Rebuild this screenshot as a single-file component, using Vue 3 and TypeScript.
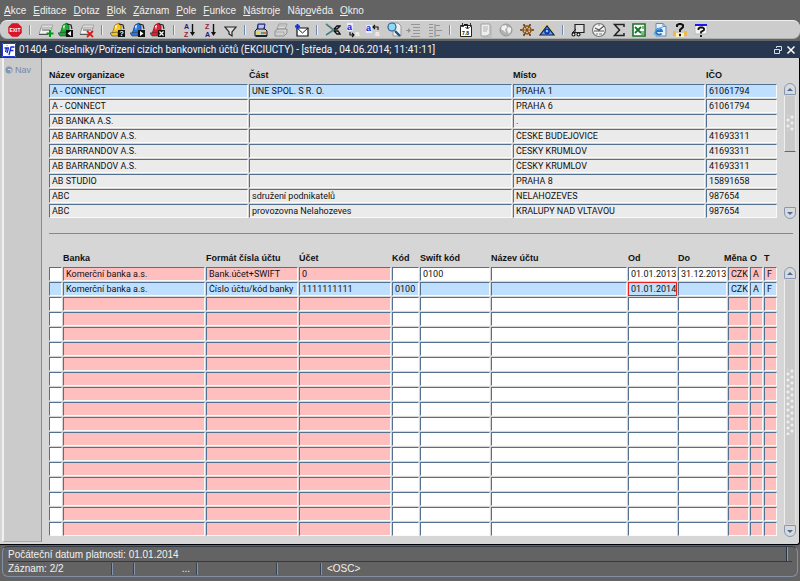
<script setup lang="ts">
import { ref } from 'vue'

interface Shape {
  d?: string
  f?: string
  s?: string
  w?: number
  t?: string
  x?: number
  y?: number
  z?: number
}
interface Tool {
  name: string
  shapes: Shape[]
}

const menu: [string, string, string][] = [
  ['', 'A', 'kce'],
  ['', 'E', 'ditace'],
  ['', 'D', 'otaz'],
  ['', 'B', 'lok'],
  ['', 'Z', 'áznam'],
  ['', 'P', 'ole'],
  ['', 'F', 'unkce'],
  ['', 'N', 'ástroje'],
  ['Náp', 'o', 'věda'],
  ['', 'O', 'kno'],
]

const sheets: Shape[] = [
  { d: 'M4 3H15L13 8H2Z', f: '#dddddd', s: '#a0a0a0', w: 0.8 },
  { d: 'M3 6H14L11 12H1Z', f: '#f2f2f2', s: '#8a8a8a', w: 0.8 },
  { d: 'M4 8H12M1 12.500H10', s: '#555555' },
]
const bin = (color: string, dark: string): Shape[] => [
  { d: 'M5 3L9 1L11 4V12L2 12Z', f: color, s: dark, w: 0.8 },
  { d: 'M5 4L7 3L6 8Z', f: '#ffffff' },
  { d: 'M9 2L13 3L14 7', s: '#222222', w: 1.2 },
  { d: 'M0 11L8 10V14L2 14Z', f: color, s: '#333333', w: 0.6 },
  { d: 'M8 8H15V15H8Z', f: '#111111' },
]

const groups: Tool[][] = [
  [
    {
      name: 'Konec',
      shapes: [
        { d: 'M5 1H11L15 5V11L11 15H5L1 11V5Z', f: '#dc1428', s: '#b8cccc', w: 0.5 },
        { t: 'EXIT', x: 2.4, y: 10, z: 5, f: '#ffffff' },
      ],
    },
  ],
  [
    { name: 'Vložit záznam', shapes: [...sheets, { d: 'M12 8V15M8.500 11.500H15.500', s: '#009a18', w: 2 }] },
    { name: 'Uložit', shapes: [...bin('#18b030', '#087020'), { d: 'M13 9V14L9.500 11.500Z', f: '#ffffff' }] },
    { name: 'Smazat záznam', shapes: [...sheets, { d: 'M8 9L14 15M14 9L8 15', s: '#e01818', w: 1.8 }] },
  ],
  [
    { name: 'Zadat dotaz', shapes: [...bin('#f8c820', '#a87808'), { t: '?', x: 9.4, y: 14, z: 7, f: '#ffffff' }] },
    { name: 'Provést dotaz', shapes: [...bin('#2878e0', '#103c88'), { d: 'M10 9V14L13.500 11.500Z', f: '#ffffff' }] },
    { name: 'Zrušit dotaz', shapes: [...bin('#e02030', '#801018'), { d: 'M9.500 9.500L13.500 13.500M13.500 9.500L9.500 13.500', s: '#ffffff', w: 1.2 }] },
  ],
  [
    {
      name: 'Seřadit vzestupně',
      shapes: [
        { t: 'A', x: 3, y: 7, z: 7, f: '#18187c' },
        { t: 'Z', x: 3, y: 15, z: 7, f: '#98203c' },
        { d: 'M11.500 2V12', s: '#111111', w: 1.4 },
        { d: 'M9 10H14L11.500 14Z', f: '#111111' },
      ],
    },
    {
      name: 'Seřadit sestupně',
      shapes: [
        { t: 'Z', x: 3, y: 7, z: 7, f: '#98203c' },
        { t: 'A', x: 3, y: 15, z: 7, f: '#18187c' },
        { d: 'M11.500 2V12', s: '#111111', w: 1.4 },
        { d: 'M9 10H14L11.500 14Z', f: '#111111' },
      ],
    },
    { name: 'Filtr', shapes: [{ d: 'M3 5H14L10 10V14L7 12V10Z', f: '#dddddd', s: '#222222', w: 1.2 }] },
  ],
  [
    {
      name: 'Tisk',
      shapes: [
        { d: 'M5 2H12L11 8H4Z', f: '#7088dc', s: '#20206c' },
        { d: 'M6 4H11M6 6H10', s: '#ffffff' },
        { d: 'M2 9L4 7H12L14 9V14H2Z', f: '#cccccc', s: '#111111' },
        { d: 'M3 11H7', s: '#e8e020', w: 1.3 },
        { d: 'M8 11H10', s: '#20a030', w: 1.3 },
        { d: 'M10 11H13', s: '#d03030', w: 1.3 },
        { d: 'M3 14H14', s: '#111111', w: 1.6 },
      ],
    },
    {
      name: 'Tisk obrazovky',
      shapes: [
        { d: 'M6 2H14L12 7H4Z', f: '#dedede', s: '#999999' },
        { d: 'M2 9L5 7H14V11L11 14H2Z', f: '#d0d0d0', s: '#909090' },
        { d: 'M2 10H11V14M6 4H12', s: '#aaaaaa' },
      ],
    },
    {
      name: 'Odeslat e-mail',
      shapes: [
        { d: 'M3 6H14V14H3Z', f: '#ffffff', s: '#111111', w: 1.2 },
        { d: 'M3 6L8.500 11L14 6', s: '#222222' },
        { d: 'M3.500 2V7M1 4.500H6', s: '#1030d8', w: 2 },
      ],
    },
  ],
  [
    {
      name: 'Vyjmout',
      shapes: [
        { d: 'M1 2L10 9M1 13L10 7', s: '#4c8080', w: 1.6 },
        { d: 'M9 7L12 4L15 4L12 7L9 7M9 9L13 9L15 12L12 12L9 9', s: '#111111', w: 1.3 },
      ],
    },
    {
      name: 'Kopírovat',
      shapes: [
        { d: 'M2 1H8V9H2Z', f: '#e8ecff' },
        { t: 'a', x: 2, y: 8, z: 9, f: '#1818d8' },
        { d: 'M5 10V13H9M7 11L9 13L7 15', s: '#111111', w: 1.1 },
        { t: 'a', x: 10, y: 14, z: 8, f: '#f4f4f4' },
      ],
    },
    {
      name: 'Vložit',
      shapes: [
        { d: 'M1 3H7V11H1Z', f: '#e8ecff' },
        { t: 'a', x: 1, y: 9, z: 9, f: '#1818d8' },
        { d: 'M8 5H13V8M10 3L8 5L10 7', s: '#111111', w: 1.1 },
        { t: 'a', x: 10, y: 14, z: 8, f: '#f4f4f4' },
      ],
    },
    {
      name: 'Seznam hodnot',
      shapes: [
        { d: 'M7 1H12L15 4V14H7Z', f: '#f0f0f0', s: '#999999' },
        { d: 'M9 9L14 14', s: '#185880', w: 2.4 },
        { d: 'M2 5A4 4 0 1 0 10 5A4 4 0 1 0 2 5', f: '#90d8f8', s: '#285888', w: 1.1 },
      ],
    },
    { name: 'Vložit řádek', shapes: [{ d: 'M5 2.500H14M7 5.500H14M7 8.500H14M7 11.500H14M5 14.500H14M0 8.500H4', s: '#969696' }, { d: 'M2 6V11L5 8.500Z', f: '#969696' }] },
    { name: 'Strom', shapes: [{ d: 'M2 2.500H6M2 5.500H6M2 8.500H6M2 11.500H6M2 14.500H6M9 3.500H13M9 8.500H15M9 13.500H13M8 2V15', s: '#929292', w: 1.2 }] },
  ],
  [
    {
      name: 'Kalendář',
      shapes: [
        { d: 'M2.500 3.500H13.500V14.500H2.500Z', f: '#ffffff', s: '#222222' },
        { d: 'M2 4.500H6M12 4.500H14', s: '#444444' },
        { d: 'M4.500 3V1M12.500 3V1', s: '#333333' },
        { t: '7.8', x: 4, y: 13, z: 5, f: '#111111' },
        { d: 'M6 2.500H9.500V6M7.500 5L9.500 7L11.500 5', s: '#111111' },
      ],
    },
    { name: 'Poznámky', shapes: [{ d: 'M3 2H12V12L9 14H3Z', f: '#eeeeee', s: '#a0a0a0' }, { d: 'M5 5H10M5 7H10M5 9H9M13 4V15H5', s: '#b0b0b0' }] },
    {
      name: 'Web',
      shapes: [
        { d: 'M2 8A6 6 0 1 0 14 8A6 6 0 1 0 2 8', f: '#b0b0b0', s: '#999999' },
        { d: 'M4 4L8 3L9 6L7 7L8 11L6 9L3 7ZM10 5L13 6L13 9L11 12L9 8Z', f: '#f2f2f2' },
      ],
    },
    {
      name: 'Navigátor',
      shapes: [
        { d: 'M4 8A4 4 0 1 0 12 8A4 4 0 1 0 4 8', s: '#8c5010', w: 1.5 },
        { d: 'M2 8H14M5 3L11 13M11 3L5 13', s: '#8c5010', w: 1.1 },
        { d: 'M4 3H6M10 3H12M2 7V9M14 7V9M4 13H6M10 13H12', s: '#6c3808', w: 1.4 },
      ],
    },
    {
      name: 'Zobrazit',
      shapes: [
        { d: 'M3 4L4 6M8 1V3M13 4L12 6M1 8H3M13 8H15', s: '#e8d840', w: 1.2 },
        { d: 'M1 13L8 4L15 13Z', f: '#6c9ce0', s: '#101c3c', w: 1.2 },
        { d: 'M5.500 9.500A2.500 2.500 0 1 0 10.500 9.500A2.500 2.500 0 1 0 5.500 9.500', f: '#1848e8', s: '#102870', w: 0.8 },
        { d: 'M7 8H9V10H7Z', f: '#80d0ff' },
      ],
    },
  ],
  [
    {
      name: 'Doprava',
      shapes: [
        { d: 'M5 2.500H14V10.500H5Z', f: '#dddddd', s: '#222222', w: 1.2 },
        { d: 'M2 10.500H12M3 10L6 7', s: '#222222' },
        { d: 'M2 12.500A1.500 1.500 0 1 0 5 12.500A1.500 1.500 0 1 0 2 12.500M7 12.500A1.500 1.500 0 1 0 10 12.500A1.500 1.500 0 1 0 7 12.500', f: '#ffffff', s: '#111111', w: 1.1 },
      ],
    },
    {
      name: 'Hodiny',
      shapes: [
        { d: 'M1.500 8A6.500 6.500 0 1 0 14.500 8A6.500 6.500 0 1 0 1.500 8', f: '#f4f4f4', s: '#777777', w: 1.2 },
        { d: 'M4 6L8 8L13 4M3 9H13', s: '#555555', w: 1.1 },
        { d: 'M5 12H7M8 12H11M8 2V4', s: '#777777' },
      ],
    },
    { name: 'Součet', shapes: [{ d: 'M13 5V2.500H3.500L8.500 8L3.500 13.500H13V11', s: '#222222', w: 1.5 }] },
    {
      name: 'Export do Excelu',
      shapes: [
        { d: 'M2 2H14V14H2Z', f: '#ffffff', s: '#187428', w: 1.6 },
        { d: 'M4 5L10 11M10 5L4 11', s: '#187428', w: 1.8 },
        { d: 'M10 9H13V13H10ZM11 4H13V7H11Z', f: '#80b880' },
      ],
    },
    {
      name: 'Internet Explorer',
      shapes: [
        { d: 'M4 1.500H11L14 4.500V14H4Z', f: '#e4f0fc', s: '#6888b8' },
        { d: 'M11 1.500V4.500H14', s: '#6888b8' },
        { d: 'M4 9H10A3 3 0 1 0 9.500 11.500', s: '#2074c8', w: 1.8 },
        { d: 'M2 13Q2 7 11 5', s: '#60b0e8', w: 1 },
      ],
    },
    {
      name: 'Nápověda k aplikaci',
      shapes: [
        { d: 'M1 9H4V14H1ZM12 9H15V14H12Z', f: '#f0b848' },
        { d: 'M4 11H7V15H4ZM9 11H12V15H9Z', f: '#fff0b0' },
        { d: 'M5 5V3L7 2H9L11 3V5L8 8V10M8 12V14', s: '#111111', w: 2 },
      ],
    },
    {
      name: 'Nápověda',
      shapes: [
        { d: 'M2 3H14V12H2Z', f: '#f4f4f4', s: '#b8b8b8' },
        { d: 'M2 3H14', s: '#1818f0', w: 2 },
        { d: 'M5.500 8V6.500L7 5.500H9.500L11 6.500V8L8 10V11.500M8 13V15', s: '#111111', w: 1.8 },
      ],
    },
  ],
]

const orgHeads = ['Název organizace', 'Část', 'Místo', 'IČO']
const orgs = ref<string[][]>([
  ['A - CONNECT', 'UNE SPOL. S R. O.', 'PRAHA 1', '61061794'],
  ['A - CONNECT', '', 'PRAHA 6', '61061794'],
  ['AB BANKA A.S.', '', '.', ''],
  ['AB BARRANDOV A.S.', '', 'ČESKE BUDEJOVICE', '41693311'],
  ['AB BARRANDOV A.S.', '', 'ČESKY KRUMLOV', '41693311'],
  ['AB BARRANDOV A.S.', '', 'ČESKY KRUMLOV', '41693311'],
  ['AB STUDIO', '', 'PRAHA 8', '15891658'],
  ['ABC', 'sdružení podnikatelů', 'NELAHOZEVES', '987654'],
  ['ABC', 'provozovna Nelahozeves', 'KRALUPY NAD VLTAVOU', '987654'],
])

const accHeads = ['', 'Banka', 'Formát čísla účtu', 'Účet', 'Kód', 'Swift kód', 'Název účtu', 'Od', 'Do', 'Měna', 'O', 'T']
const required = [1, 2, 3, 9, 10, 11]
const accounts = ref<string[][]>([
  ['', 'Komerční banka a.s.', 'Bank.účet+SWIFT', '0', '', '0100', '', '01.01.2013', '31.12.2013', 'CZK', 'A', 'F'],
  ['', 'Komerční banka a.s.', 'Číslo účtu/kód banky', '1111111111', '0100', '', '', '01.01.2014', '', 'CZK', 'A', 'F'],
  ...Array.from({ length: 16 }, () => Array<string>(12).fill('')),
])
const current = ref(1)
</script>

<template>
  <div class="app">
    <nav class="menu">
      <a v-for="m in menu" :key="m.join('')" href="#">{{ m[0] }}<u>{{ m[1] }}</u>{{ m[2] }}</a>
    </nav>

    <div class="toolbar">
      <div class="tools">
        <template v-for="(g, gi) in groups" :key="gi">
          <i v-if="gi" class="sep"></i>
          <button v-for="tool in g" :key="tool.name" type="button" class="tool" :aria-label="tool.name">
            <svg viewBox="0 0 16 16" width="16" height="16" aria-hidden="true">
              <template v-for="(s, i) in tool.shapes" :key="i">
                <text v-if="s.t" :x="s.x" :y="s.y" :font-size="s.z" :fill="s.f" class="glyph">{{ s.t }}</text>
                <path v-else :d="s.d" :fill="s.f ?? 'none'" :stroke="s.s ?? 'none'" :stroke-width="s.w ?? 1" />
              </template>
            </svg>
          </button>
        </template>
      </div>
    </div>

    <header class="title">
      <svg class="logo" viewBox="0 0 14 14" width="14" height="14" aria-hidden="true">
        <rect width="14" height="14" fill="#fff" />
        <path d="M0.500 0.500H13.500V13.500H0.500Z" fill="none" stroke="#2038d8" />
        <path d="M4.500 5L3.500 9M5 3V2.500M7 12L9 4H12.500M8 7.500H11.500M2.500 5H7M6.500 5L5 10" fill="none" stroke="#1828d0" stroke-width="1.300" />
      </svg>
      <h1>01404 - Číselníky/Pořízení cizích bankovních účtů (EKCIUCTY) - [středa , 04.06.2014; 11:41:11]</h1>
      <button type="button" aria-label="Obnovit okno">
        <svg viewBox="0 0 10 10" width="10" height="10"><path d="M3.500 3V1.500H8.500V5.500H6.500M1.500 4.500H6.500V8.500H1.500Z" fill="none" stroke="#d8dce4" /></svg>
      </button>
      <button type="button" aria-label="Zavřít okno">
        <svg viewBox="0 0 10 10" width="10" height="10"><path d="M1.500 1.500L8.500 8.500M8.500 1.500L1.500 8.500" fill="none" stroke="#fff" stroke-width="1.500" /></svg>
      </button>
    </header>

    <div class="window">
      <aside class="side">
        <button type="button" class="nav">
          <svg viewBox="0 0 8 8" width="8" height="8" aria-hidden="true">
            <circle cx="4" cy="4" r="3.500" fill="#8496b0" />
            <path d="M3 3.500H6V6.500" fill="none" stroke="#d4dae4" />
          </svg>
          <span>Nav</span>
        </button>
      </aside>

      <main class="content">
        <section class="block orgs">
          <table>
            <colgroup>
              <col class="w-name" /><col /><col class="w-place" /><col class="w-ico" />
            </colgroup>
            <thead>
              <tr><th v-for="h in orgHeads" :key="h" scope="col">{{ h }}</th></tr>
            </thead>
            <tbody>
              <tr v-for="(row, r) in orgs" :key="r" :class="{ active: r === 0 }">
                <td v-for="(_, c) in row" :key="c">
                  <input v-model="row[c]" type="text" class="field plain" readonly :aria-label="orgHeads[c]" />
                </td>
              </tr>
            </tbody>
          </table>
          <div class="scroll">
            <button type="button" class="arrow up" aria-label="Nahoru"></button>
            <div class="thumb part"><i class="grip"></i></div>
            <div class="rest"></div>
            <button type="button" class="arrow down" aria-label="Dolů"></button>
          </div>
        </section>

        <hr />

        <section class="block accounts">
          <table>
            <colgroup>
              <col class="w-mark" /><col class="w-bank" /><col class="w-format" /><col class="w-format" />
              <col class="w-code" /><col class="w-swift" /><col /><col class="w-date" /><col class="w-date" />
              <col class="w-cur" /><col class="w-mark" /><col class="w-mark" />
            </colgroup>
            <thead>
              <tr><th v-for="(h, i) in accHeads" :key="i" scope="col" :class="{ wide: h === 'Měna' }">{{ h }}</th></tr>
            </thead>
            <tbody>
              <tr v-for="(row, r) in accounts" :key="r" :class="{ active: r === current }">
                <td v-for="(_, c) in row" :key="c">
                  <input
                    v-model="row[c]"
                    type="text"
                    class="field"
                    :class="{ required: required.includes(c), focused: r === current && c === 7 }"
                    :aria-label="accHeads[c] || 'Výběr'"
                    @focus="current = r"
                  />
                </td>
              </tr>
            </tbody>
          </table>
          <div class="scroll">
            <button type="button" class="arrow up" aria-label="Nahoru"></button>
            <div class="thumb"><i class="grip long"></i></div>
            <button type="button" class="arrow down" aria-label="Dolů"></button>
          </div>
        </section>
      </main>
    </div>

    <footer class="status">
      <div class="line message"><span>Počáteční datum platnosti: 01.01.2014</span></div>
      <div class="line">
        <span class="s-record">Záznam: 2/2</span>
        <span class="s-a"></span>
        <span class="s-b">...</span>
        <span class="s-c"></span>
        <span class="s-d"></span>
        <span class="s-osc">&lt;OSC&gt;</span>
      </div>
    </footer>
  </div>
</template>

<style>
body {
  margin: 0;
  background: #636363;
}
</style>

<style scoped>
.app {
  font-family: "Liberation Sans", Arial, sans-serif;
  font-size: 10px;
  color: #111;
}
button {
  border: 0;
  padding: 0;
  background: none;
  font: inherit;
  color: inherit;
}
.menu {
  display: flex;
  gap: 7px;
  height: 20px;
  padding-left: 4px;
  align-items: center;
}
.menu a {
  color: #f0f0f0;
  text-decoration: none;
}
.toolbar {
  height: 19px;
  margin-bottom: 2px;
  box-sizing: border-box;
  border-top: 1px solid #efefef;
  border-bottom: 1px solid #aab0b0;
  border-radius: 7px;
  background: #cccccc;
  padding: 0 6px;
}
.tools {
  display: flex;
  justify-content: space-between;
  align-items: center;
  max-width: 704px;
  height: 17px;
}
.tool {
  display: flex;
  justify-content: center;
  width: 18px;
}
.glyph {
  font-weight: bold;
}
.sep {
  width: 2px;
  height: 10px;
  margin: 0 3px;
  box-sizing: border-box;
  border-left: 1px solid #6c8cb0;
  border-right: 1px solid #eeeeee;
}
.title {
  display: flex;
  align-items: center;
  gap: 3px;
  height: 17px;
  padding: 0 4px 0 2px;
  background: #27374f;
  color: #f4f4f4;
}
.title h1 {
  flex: 1;
  margin: 0;
  font-family: Roboto, "Liberation Sans", sans-serif;
  font-size: 10px;
  font-weight: normal;
  white-space: nowrap;
  overflow: hidden;
}
.title button,
.logo {
  display: flex;
}
.window {
  display: flex;
  border-right: 1px solid #000;
  border-bottom: 1px solid #000;
  border-bottom-right-radius: 3px;
  background: #d6d6d6;
}
.side {
  width: 40px;
  margin: 0 0 2px 2px;
  box-sizing: border-box;
  border-left: 2px solid #f0f0f0;
  border-right: 1px solid #7890ac;
  border-bottom: 1px solid #a0acb8;
  background: #cbcbcb;
}
.nav {
  display: flex;
  align-items: center;
  gap: 2px;
  margin: 7px 1px 0;
  color: #7488a8;
  font-size: 9px;
}
.content {
  flex: 1;
  min-width: 0;
  padding: 0 3px 7px 7px;
}
.block {
  display: flex;
  gap: 6px;
}
table {
  flex: 1;
  width: 100%;
  min-width: 0;
  table-layout: fixed;
  border-collapse: collapse;
}
th {
  height: 26px;
  box-sizing: border-box;
  padding: 0 0 3px;
  vertical-align: bottom;
  text-align: left;
  font-size: 9px;
  line-height: 12px;
  white-space: nowrap;
}
th.wide {
  direction: rtl;
  padding-right: 3px;
}
td {
  height: 15px;
  padding: 0 1px 0 0;
  line-height: 0;
  vertical-align: top;
}
.w-name { width: 200px; }
.w-place { width: 193px; }
.w-ico { width: 72px; }
.w-mark { width: 14px; }
.w-bank { width: 143px; }
.w-format { width: 93px; }
.w-code { width: 28px; }
.w-swift { width: 71px; }
.w-date { width: 50px; }
.w-cur { width: 22px; }
.field {
  display: block;
  width: 100%;
  height: 14px;
  box-sizing: border-box;
  margin: 0;
  padding: 0 0 0 2px;
  border: 1px solid;
  border-color: #54708f #fafafa #fafafa #54708f;
  border-radius: 0;
  outline: 0;
  background: #fff;
  color: #111;
  font-family: Roboto, "Liberation Sans", sans-serif;
  font-size: 9px;
}
.plain { background: #ebebeb; }
.required { background: #ffbfbf; }
.active .field { background: #bfdfff; }
.active .focused { border-color: #e82020; }
.scroll {
  display: flex;
  flex-direction: column;
  width: 12px;
  margin-top: 25px;
}
.arrow {
  display: flex;
  align-items: center;
  justify-content: center;
  height: 12px;
  box-sizing: border-box;
  border: 1px solid #8498b4;
  background: #dadada;
}
.arrow::before {
  content: "";
  border: 3px solid transparent;
}
.up { border-radius: 6px 6px 1px 1px; }
.down { border-radius: 1px 1px 6px 6px; }
.up::before {
  border-top: 0;
  border-bottom-color: #4c6c98;
}
.down::before {
  border-bottom: 0;
  border-top-color: #4c6c98;
}
.thumb {
  display: flex;
  flex: 1;
  align-items: center;
  justify-content: center;
  margin: 1px 0;
  border-left: 1px solid #eeeeee;
  border-right: 1px solid #e4e4e4;
  background: #cacaca;
}
.part {
  flex: 1;
  border-bottom: 1px solid #4c6c98;
}
.rest {
  flex: 1;
}
.grip {
  width: 8px;
  height: 16px;
  background:
    radial-gradient(circle at 2px 2px, #eeeeee 1px, transparent 2px) 0 3px / 8px 6px,
    radial-gradient(circle at 2px 2px, #eeeeee 1px, transparent 2px) 4px 0 / 8px 6px;
}
.long { height: 66px; }
hr {
  height: 1px;
  margin: 14px 3px 15px 0;
  border: 0;
  background: #85888c;
}
.accounts th { height: 18px; }
.accounts .scroll { margin-top: 18px; }
.status {
  margin: 1px 2px 4px;
  border: 1px solid #8490a4;
  border-top-color: #303c4c;
  border-radius: 6px;
  color: #f0f0f0;
}
.line {
  display: flex;
  align-items: center;
  height: 14px;
  margin: 0 5px;
}
.message {
  border-bottom: 1px solid #2c3c50;
}
.message span {
  flex: 1;
}
.message::after {
  content: "";
  width: 1px;
  height: 14px;
  margin-right: 4px;
  border-left: 1px solid #243448;
  background: #8c9cb4;
}
.line:not(.message) span {
  height: 12px;
  line-height: 12px;
  box-sizing: border-box;
}
.line:not(.message) span + span {
  border-left: 1px solid #34445c;
  box-shadow: inset 1px 0 #8494ac;
}
.s-record { width: 103px; }
.s-a { width: 22px; }
.s-b {
  width: 63px;
  padding-right: 6px;
  text-align: right;
}
.s-c { width: 80px; }
.s-d { width: 44px; }
.s-osc { padding-left: 6px; }
</style>
